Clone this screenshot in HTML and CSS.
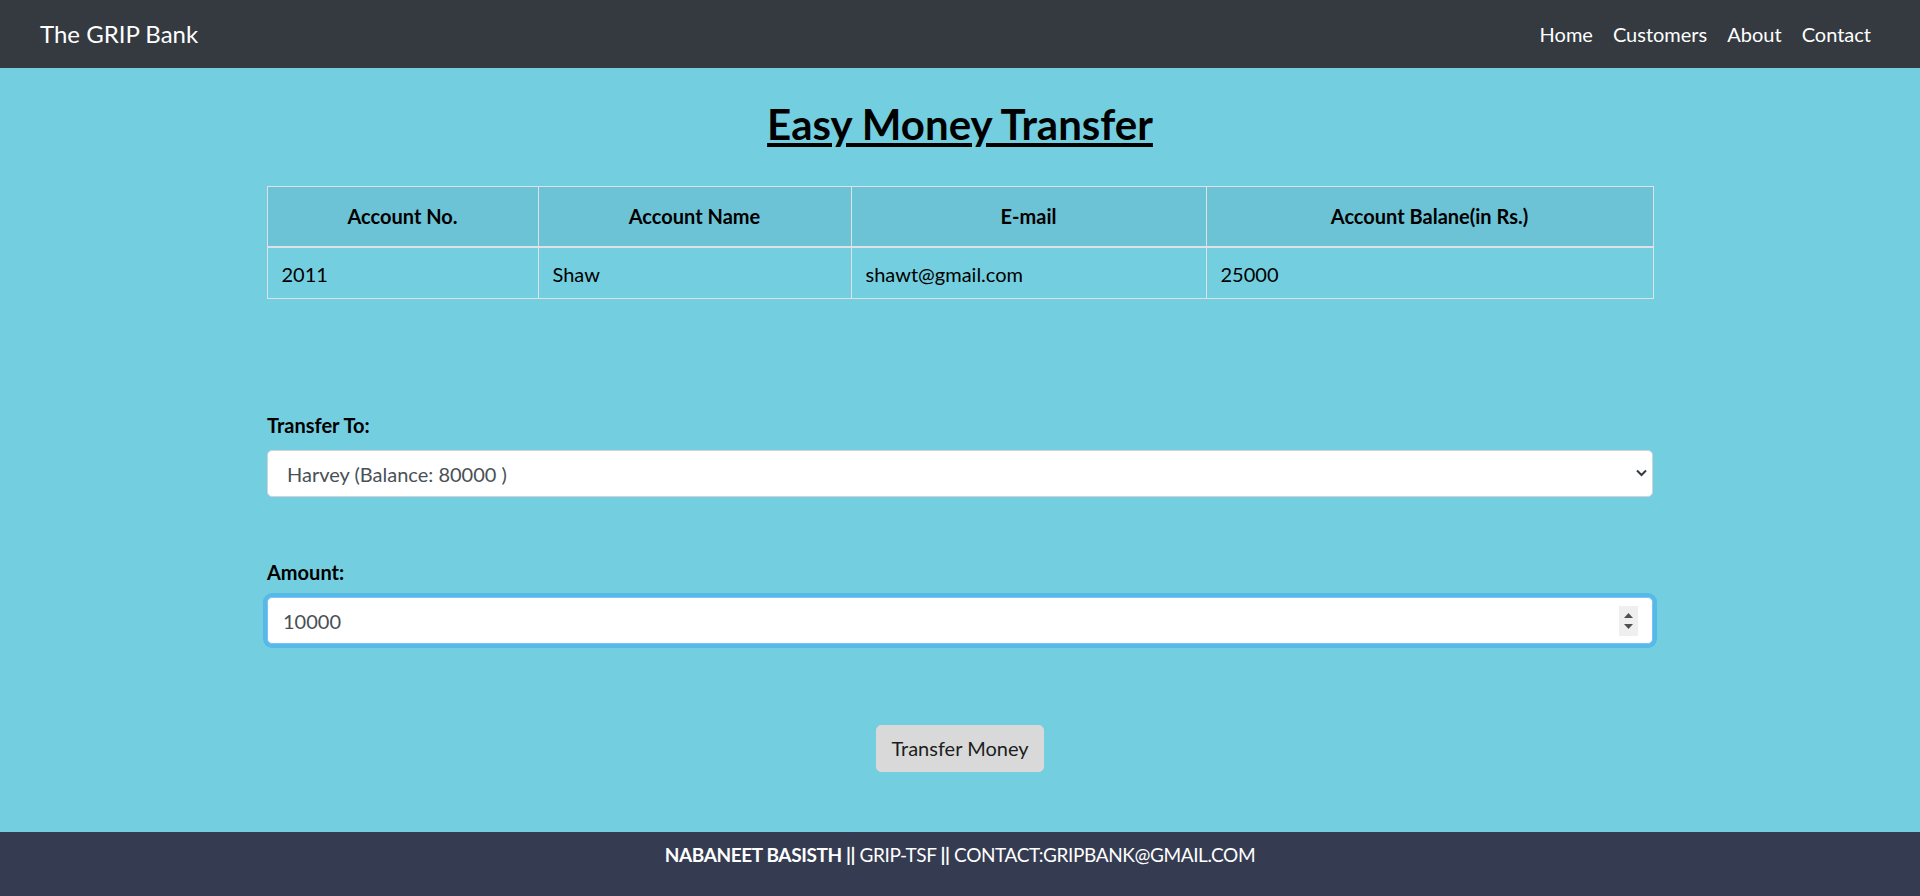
FILE: index.html
```html
<!DOCTYPE html>
<html lang="en">
<head>
<meta charset="utf-8">
<title>The GRIP Bank - Transfer</title>
<link rel="stylesheet" href="styles.css">
</head>
<body>
<nav class="navbar">
  <a class="brand" href="#">The GRIP Bank</a>
  <ul class="nav-links">
    <li><a href="#">Home</a></li>
    <li><a href="#">Customers</a></li>
    <li><a href="#">About</a></li>
    <li><a href="#">Contact</a></li>
  </ul>
</nav>

<main class="page">
  <h1 class="title">Easy Money Transfer</h1>

  <table class="account-table">
    <colgroup>
      <col class="col-no">
      <col class="col-name">
      <col class="col-email">
      <col class="col-bal">
    </colgroup>
    <thead>
      <tr>
        <th>Account No.</th>
        <th>Account Name</th>
        <th>E-mail</th>
        <th>Account Balane(in Rs.)</th>
      </tr>
    </thead>
    <tbody>
      <tr>
        <td>2011</td>
        <td>Shaw</td>
        <td>shawt@gmail.com</td>
        <td>25000</td>
      </tr>
    </tbody>
  </table>

  <form class="transfer-form">
    <div class="field">
      <label class="field-label" for="to">Transfer To:</label>
      <div class="control-wrap">
        <select id="to" class="control control-select">
          <option>Harvey (Balance: 80000 )</option>
        </select>
        <svg class="chevron" width="11" height="8" viewBox="0 0 11 8" aria-hidden="true">
          <path d="M1 1.5 L5.5 6 L10 1.5" fill="none" stroke="#343a40" stroke-width="2"/>
        </svg>
      </div>
    </div>

    <div class="field field-amount">
      <label class="field-label" for="amount">Amount:</label>
      <div class="control-wrap">
        <input id="amount" class="control control-focus" type="text" value="10000">
        <span class="spinner" aria-hidden="true">
          <svg width="19" height="30" viewBox="0 0 19 30">
            <path d="M5 12 L9.5 7 L14 12 Z" fill="#505050"/>
            <path d="M5 18 L9.5 23 L14 18 Z" fill="#505050"/>
          </svg>
        </span>
      </div>
    </div>

    <div class="actions">
      <button type="button" class="btn">Transfer Money</button>
    </div>
  </form>
</main>

<footer class="footer">
  <b>NABANEET BASISTH ||</b> GRIP-TSF <b>||</b> CONTACT:GRIPBANK@GMAIL.COM
</footer>
</body>
</html>
```

FILE: styles.css
```css
* { box-sizing: border-box; }

html, body { height: 100%; }

body {
  margin: 0;
  min-height: 100vh;
  display: flex;
  flex-direction: column;
  background: #73cfdf;
  color: #212529;
  font-family: "Lato", "Liberation Sans", sans-serif;
  font-size: 20px;
  line-height: 30px;
}

/* Navbar */
.navbar {
  height: 68px;
  flex: 0 0 auto;
  display: flex;
  align-items: center;
  justify-content: space-between;
  padding: 0 39px 0 40px;
  background: #343a40;
}

.brand {
  color: #fff;
  font-size: 24px;
  text-decoration: none;
  line-height: 30px;
}

.nav-links {
  list-style: none;
  margin: 0;
  padding: 0;
  display: flex;
}

.nav-links a {
  display: block;
  padding: 0 10px;
  color: #fff;
  text-decoration: none;
  font-size: 20px;
}

/* Main */
.page {
  flex: 1 0 auto;
  display: flex;
  flex-direction: column;
  align-items: center;
  padding-top: 31px;
}

.title {
  margin: 0;
  font-size: 42px;
  line-height: 50px;
  font-weight: 700;
  color: #000;
  text-decoration: underline;
  text-decoration-thickness: 4px;
  text-underline-offset: 3px;
}

.account-table {
  margin-top: 37px;
  width: 1386px;
  table-layout: fixed;
  border-collapse: collapse;
  border: 1px solid #dee2e6;
  color: #000;
}

.col-no { width: 271px; }
.col-name { width: 313px; }
.col-email { width: 355px; }
.col-bal { width: 447px; }

.account-table th,
.account-table td {
  border: 1px solid #dee2e6;
}

.account-table th {
  background: #6cc3d5;
  font-weight: 700;
  text-align: center;
  padding: 14px 14px 15px;
  border-bottom-width: 2px;
}

.account-table td {
  text-align: left;
  padding: 11px 14px 9px;
}

/* Form */
.transfer-form {
  width: 1386px;
  margin-top: 111px;
  display: flex;
  flex-direction: column;
}

.field-label {
  display: block;
  font-weight: 700;
  color: #000;
  margin-bottom: 10px;
}

.field-amount {
  margin-top: 60px;
}

.control-wrap {
  position: relative;
}

.control {
  display: block;
  width: 100%;
  height: 47px;
  margin: 0;
  padding: 0 40px 0 19px;
  font-family: inherit;
  font-size: 20px;
  color: #495057;
  background: #fff;
  border: 1px solid #ced4da;
  border-radius: 5px;
  outline: none;
  appearance: none;
  -webkit-appearance: none;
}

.control-focus {
  padding-left: 15px;
  border-color: #80bdff;
  box-shadow: 0 0 0 4px #56bae7;
}

.chevron {
  position: absolute;
  right: 6px;
  top: 19px;
  pointer-events: none;
}

.spinner {
  position: absolute;
  right: 15px;
  top: 9px;
  width: 19px;
  height: 30px;
  background: #efefef;
  display: block;
}

.spinner svg { display: block; }

.actions {
  margin-top: 81px;
  display: flex;
  justify-content: center;
}

.btn {
  font-family: inherit;
  font-size: 20px;
  line-height: 30px;
  color: #1b1e21;
  background: #d9d9d9;
  border: 1px solid #d9d9d9;
  border-radius: 5px;
  padding: 7px 14px 8px;
  min-width: 168px;
  cursor: pointer;
}

/* Footer */
.footer {
  flex: 0 0 auto;
  height: 64px;
  padding-top: 8px;
  background: #353c52;
  color: #fff;
  text-align: center;
  font-size: 19px;
  letter-spacing: -0.4px;
  line-height: 30px;
}

.footer b { font-weight: 700; }
```
